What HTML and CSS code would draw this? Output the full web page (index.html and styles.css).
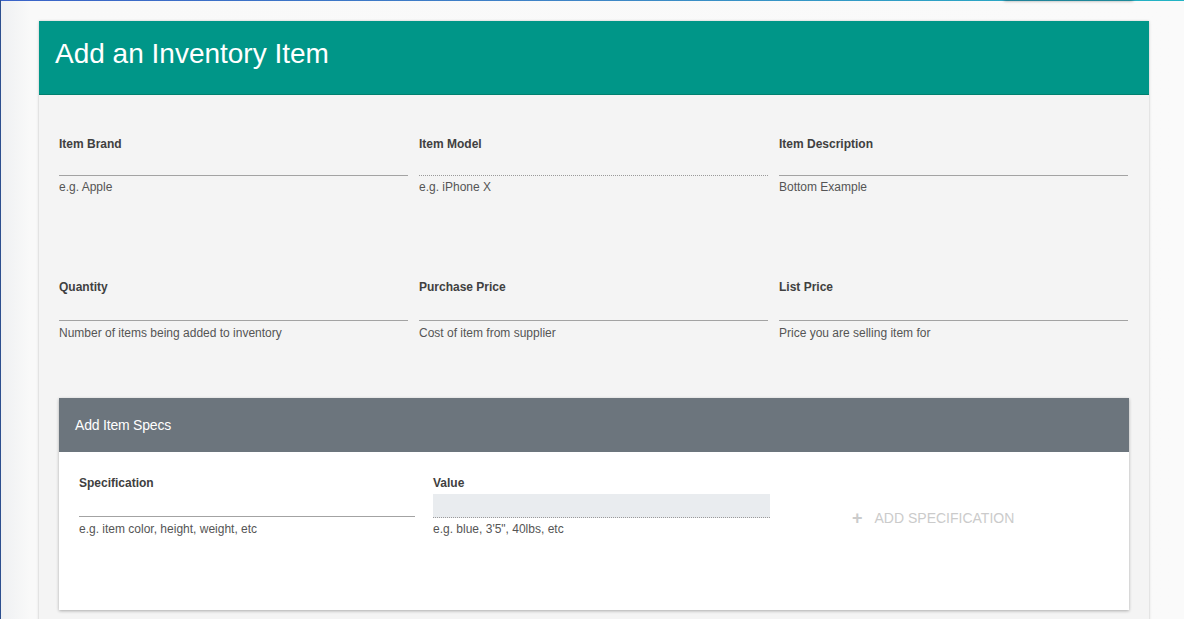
FILE: index.html
```html
<!DOCTYPE html>
<html lang="en">
<head>
<meta charset="utf-8">
<title>Add an Inventory Item</title>
<link rel="stylesheet" href="styles.css">
</head>
<body>
<div class="topline"></div>
<div class="ghost-btn"></div>
<main class="page">
  <section class="card">
    <header class="card-head">
      <h1 class="title">Add an Inventory Item</h1>
    </header>
    <div class="card-body">
      <div class="grid row-one">
        <div class="field">
          <label class="label">Item Brand</label>
          <div class="input short"></div>
          <div class="helper">e.g. Apple</div>
        </div>
        <div class="field">
          <label class="label">Item Model</label>
          <div class="input short dotted"></div>
          <div class="helper">e.g. iPhone X</div>
        </div>
        <div class="field">
          <label class="label">Item Description</label>
          <div class="input short"></div>
          <div class="helper">Bottom Example</div>
        </div>
      </div>
      <div class="grid row-two">
        <div class="field">
          <label class="label">Quantity</label>
          <div class="input"></div>
          <div class="helper tall">Number of items being added to inventory</div>
        </div>
        <div class="field">
          <label class="label">Purchase Price</label>
          <div class="input"></div>
          <div class="helper tall">Cost of item from supplier</div>
        </div>
        <div class="field">
          <label class="label">List Price</label>
          <div class="input"></div>
          <div class="helper tall">Price you are selling item for</div>
        </div>
      </div>
      <section class="spec-card">
        <header class="spec-head">Add Item Specs</header>
        <div class="spec-body">
          <div class="field">
            <label class="label">Specification</label>
            <div class="input spec"></div>
            <div class="helper spec-help">e.g. item color, height, weight, etc</div>
          </div>
          <div class="field">
            <label class="label">Value</label>
            <div class="input disabled dotted"></div>
            <div class="helper value-help">e.g. blue, 3'5", 40lbs, etc</div>
          </div>
          <div class="add-wrap">
            <button class="add-btn" type="button"><span class="plus">+</span>ADD SPECIFICATION</button>
          </div>
        </div>
      </section>
    </div>
  </section>
</main>
</body>
</html>
```

FILE: styles.css
```css
* { box-sizing: border-box; }

html, body {
  margin: 0;
  padding: 0;
  height: 100%;
  overflow: hidden;
}

body {
  background: linear-gradient(to right, #eef0f2 0, #f9f9f9 30px, #fafafa 100%);
  border-left: 1px solid #2c4f8f;
  font-family: "Liberation Sans", Arial, Helvetica, sans-serif;
  position: relative;
}

.topline {
  height: 1px;
  background: linear-gradient(to right, #3a63c8, #3f86c6 50%, #22b4c4);
}

.ghost-btn {
  position: absolute;
  top: -30px;
  left: 1003px;
  width: 129px;
  height: 30px;
  background: #fafafa;
  box-shadow: 0 1px 3px rgba(0,0,0,0.35);
}

.page {
  padding: 20px 0 0 38px;
}

.card {
  width: 1110px;
  background: #f4f4f4;
  box-shadow: 0 0 2px rgba(0,0,0,0.18), 0 1px 4px rgba(0,0,0,0.08);
  min-height: 700px;
}

.card-head {
  background: #009688;
  height: 74px;
  border-bottom: 1px solid #00806f;
  padding: 0 16px 7px;
  display: flex;
  align-items: center;
}

.title {
  margin: 0;
  color: #fff;
  font-size: 28px;
  font-weight: 400;
  line-height: 32px;
}

.card-body {
  padding: 42px 21px 0 20px;
}

.grid {
  display: grid;
  grid-template-columns: 349px 349px 349px;
  column-gap: 11px;
}

.row-two { margin-top: 86px; }

.field {
  display: flex;
  flex-direction: column;
}

.label {
  font-size: 12px;
  line-height: 14px;
  font-weight: 700;
  color: #404040;
}

.input {
  height: 27px;
  border-bottom: 1px solid #a3a3a3;
}

.input.short { height: 25px; }
.input.spec { height: 27px; }

.input.dotted {
  border-bottom: 1px dotted #9a9a9a;
}

.input.disabled {
  background: #e9ecef;
  height: 24px;
  margin-top: 4px;
}

.helper {
  margin-top: 4px;
  font-size: 12px;
  line-height: 14px;
  color: #555;
}

.helper.tall { margin-top: 5px; }
.helper.spec-help { margin-top: 5px; }
.helper.value-help { margin-top: 4px; }

.spec-card {
  margin-top: 58px;
  width: 1070px;
  background: #fff;
  box-shadow: 0 1px 3px rgba(0,0,0,0.3);
}

.spec-head {
  background: #6c757d;
  color: #fff;
  height: 54px;
  padding: 0 16px;
  display: flex;
  align-items: center;
  font-size: 14px;
  letter-spacing: -0.2px;
}

.spec-body {
  display: grid;
  grid-template-columns: 336px 337px 1fr;
  column-gap: 18px;
  padding: 24px 20px 74px 20px;
}

.add-wrap {
  display: flex;
  align-items: flex-start;
  padding-left: 64px;
  padding-top: 34px;
}

.add-btn {
  background: none;
  border: 0;
  padding: 0;
  font-family: inherit;
  font-size: 14px;
  line-height: 16px;
  color: #cbcbcb;
  display: flex;
  align-items: center;
  cursor: default;
}

.plus {
  font-size: 18px;
  font-weight: 700;
  margin-right: 12px;
  line-height: 16px;
}
```
